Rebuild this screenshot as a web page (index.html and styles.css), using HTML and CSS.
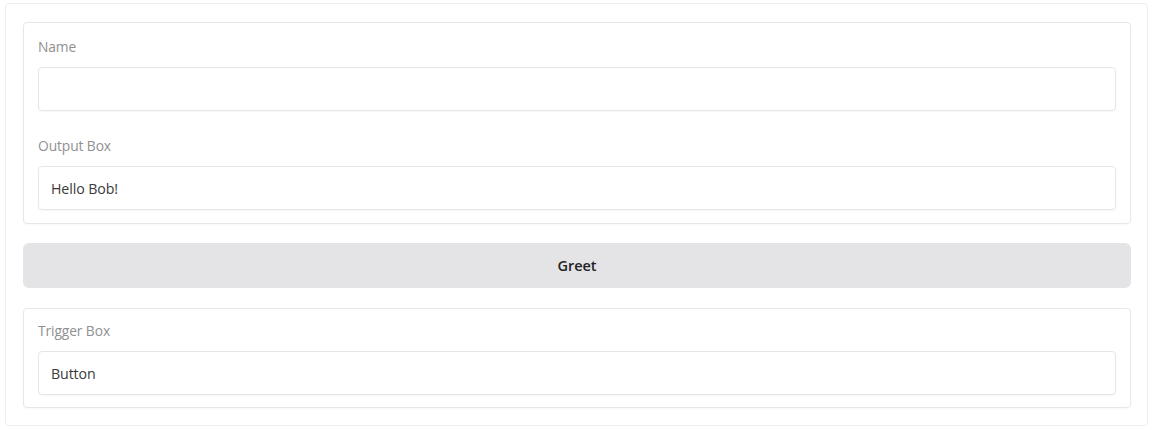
FILE: index.html
```html
<!DOCTYPE html>
<html>
<head>
<meta charset="utf-8">
<link rel="stylesheet" href="styles.css">
</head>
<body>
<div class="app">
  <div class="card">
    <div class="field">
      <div class="label">Name</div>
      <div class="input"></div>
    </div>
    <div class="field">
      <div class="label">Output Box</div>
      <div class="input">Hello Bob!</div>
    </div>
  </div>
  <button class="btn">Greet</button>
  <div class="card card2">
    <div class="field">
      <div class="label">Trigger Box</div>
      <div class="input">Button</div>
    </div>
  </div>
</div>
</body>
</html>
```
FILE: styles.css
```css
html, body { margin: 0; padding: 0; background: #fff; }
body {
  font-family: "Open Sans", "Noto Sans", sans-serif;
  padding: 3px 7px 0 5px;
}
.app {
  border: 1px solid #efefef;
  border-radius: 4px;
  padding: 18px 16px 17px 17px;
  display: flex;
  flex-direction: column;
  gap: 19px;
}
.card {
  border: 1px solid #e7e7e7;
  border-radius: 4px;
  padding: 14px 14px 13px;
  display: flex;
  flex-direction: column;
  gap: 25px;
  box-shadow: 0 1px 2px rgba(0,0,0,0.03);
}
.card2 { padding: 12px 14px 12px; margin-top: 1px; }
.field { display: flex; flex-direction: column; gap: 10px; }
.label {
  font-size: 13.8px;
  line-height: 20px;
  color: #909090;
  letter-spacing: -0.1px;
}
.input {
  height: 42px;
  border: 1px solid #e6e6e6;
  border-radius: 4px;
  box-shadow: 0 1px 2px rgba(0,0,0,0.04);
  display: flex;
  align-items: center;
  padding: 0 12px;
  font-size: 14.2px;
  color: #3a3a3a;
  letter-spacing: -0.1px;
}
.btn {
  height: 45px;
  border: none;
  border-radius: 6px;
  background: #e4e4e6;
  font-family: "Open Sans", "Noto Sans", sans-serif;
  font-weight: 600;
  font-size: 14.5px;
  color: #222;
}
```
